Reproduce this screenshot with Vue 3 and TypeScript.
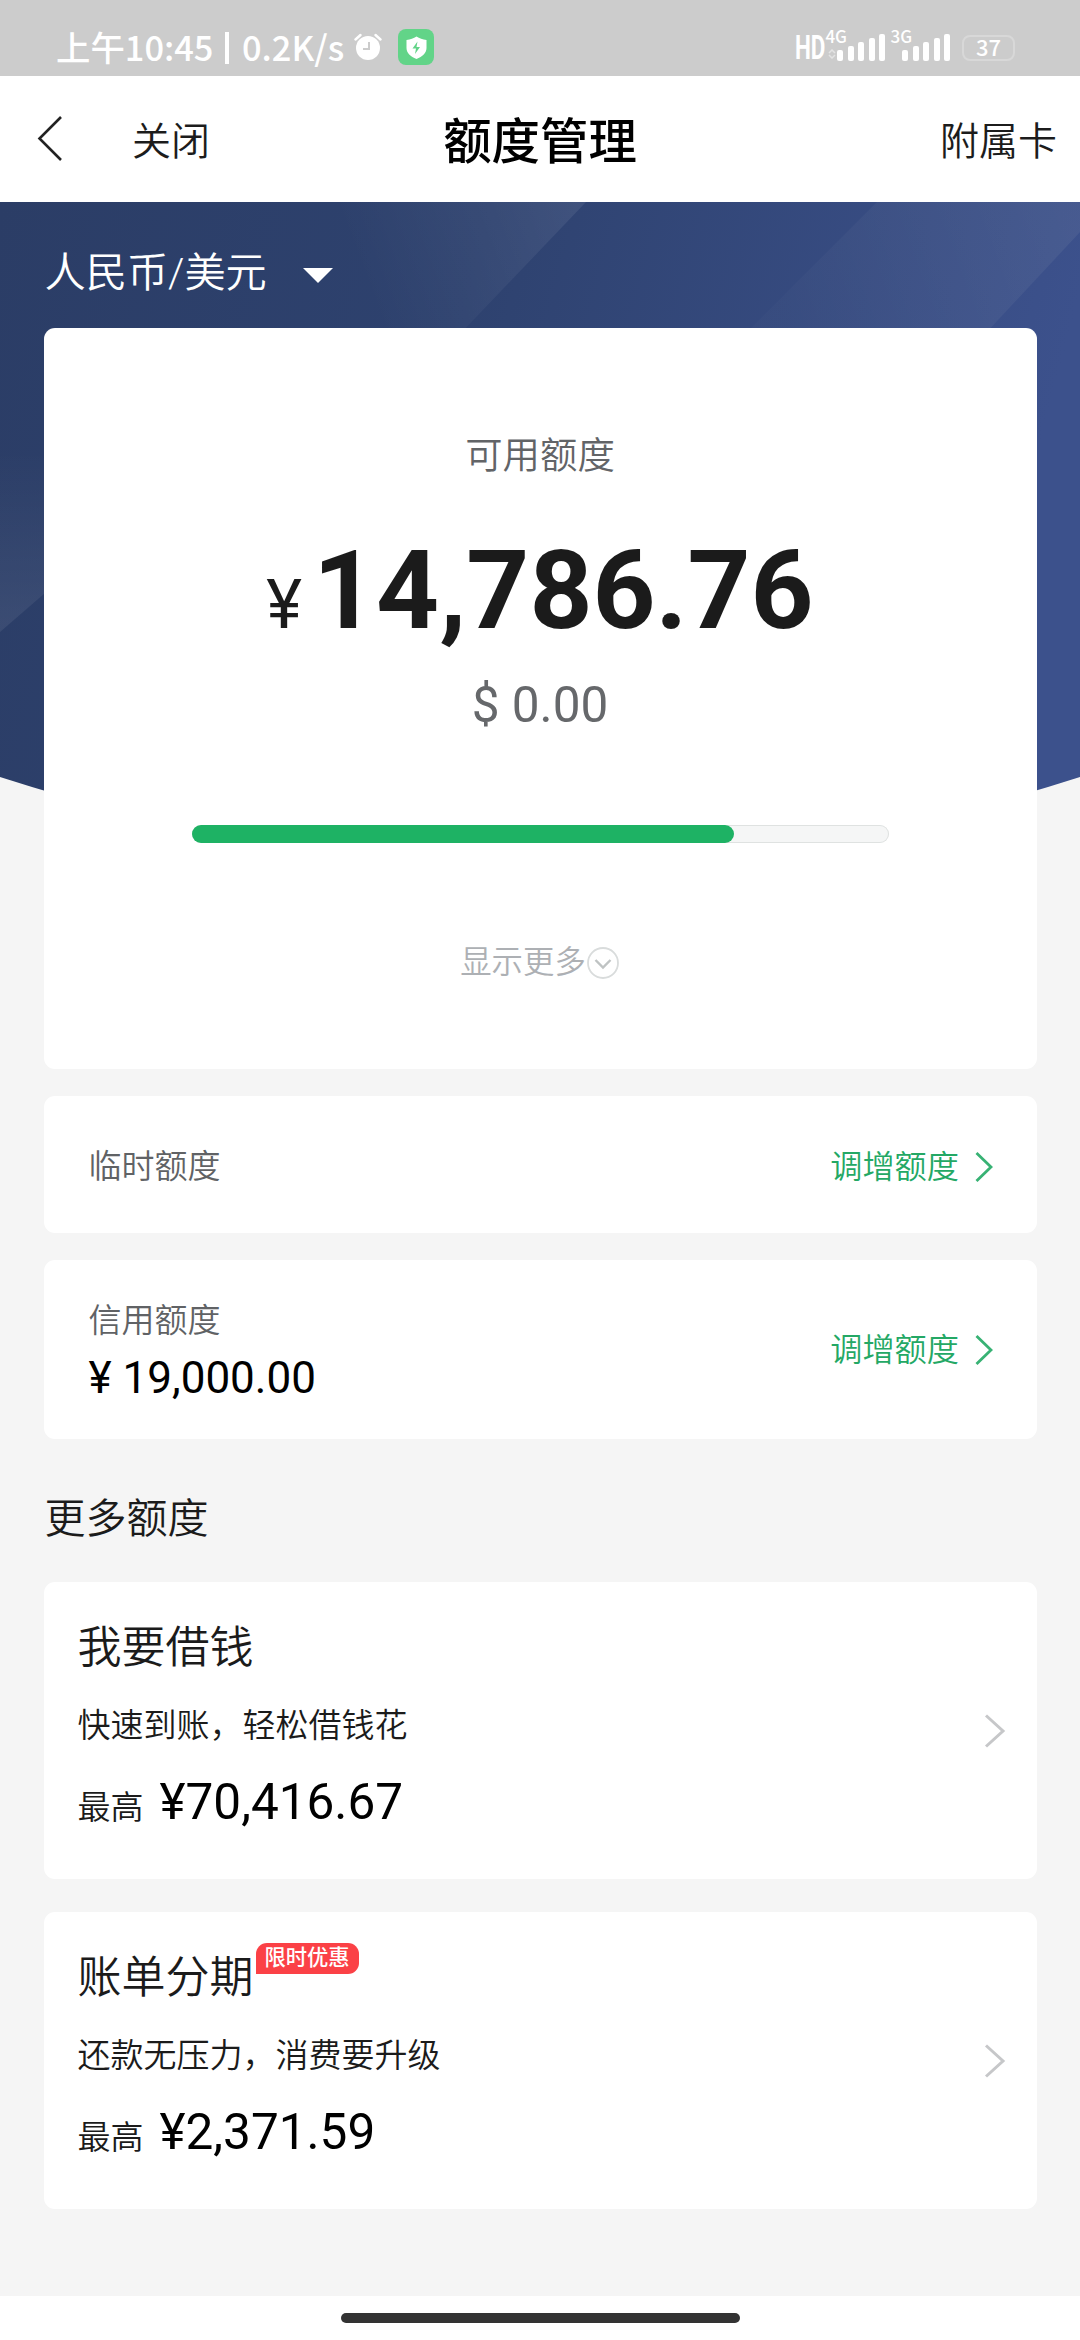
<script setup lang="ts">
interface LimitRow {
  label: string
  amount?: string
  action: string
}

interface Offer {
  title: string
  tag?: string
  desc: string
  amount: string
}

const limits: LimitRow[] = [
  { label: '临时额度', action: '调增额度' },
  { label: '信用额度', amount: '¥ 19,000.00', action: '调增额度' },
]

const offers: Offer[] = [
  { title: '我要借钱', desc: '快速到账，轻松借钱花', amount: '¥70,416.67' },
  { title: '账单分期', tag: '限时优惠', desc: '还款无压力，消费要升级', amount: '¥2,371.59' },
]

const total = 19000
const available = 14786.76
const availablePercent = (available / total) * 100

const bars = [11.5, 15.5, 19, 23, 27]
</script>

<template>
  <div class="page">
    <header class="status">
      <span class="clock">上午10:45</span>
      <span class="divider"></span>
      <span class="speed">0.2K/s</span>
      <svg class="alarm" width="28" height="28" viewBox="0 0 28 28">
        <circle cx="14" cy="15" r="12" fill="#fff" />
        <path d="M1.5 6.5 6.5 2M26.5 6.5 21.5 2" stroke="#fff" stroke-width="2.4" stroke-linecap="round" />
        <path d="M15 9v7h-6" fill="none" stroke="#ccc" stroke-width="2" />
      </svg>
      <svg class="guard" width="36" height="36" viewBox="0 0 36 36">
        <rect width="36" height="36" rx="8" fill="#62d488" />
        <path d="M18.5 7.5c3 2 6 3 10 3.5v8c0 5-4 8.5-10 11-6-2.5-10-6-10-11v-8c4-.5 7-1.5 10-3.5z" fill="#fff" />
        <path d="M19.5 12.5l-5 7h3.5l-1 5.5 5-7h-3.5z" fill="#62d488" />
      </svg>
      <div class="signals">
        <span class="hd">HD</span>
        <div class="net">
          <span class="gen">4G</span>
          <svg class="data" width="8" height="10" viewBox="0 0 8 10">
            <path d="M1 4l3-3 3 3M1 6l3 3 3-3" fill="none" stroke="#e4e4e4" stroke-width="1.5" />
          </svg>
          <i v-for="h in bars" :key="h" class="bar" :style="{ height: h + 'px' }"></i>
        </div>
        <div class="net second">
          <span class="gen">3G</span>
          <i v-for="h in bars" :key="h" class="bar" :style="{ height: h + 'px' }"></i>
        </div>
        <div class="battery">37</div>
      </div>
    </header>

    <nav class="nav">
      <div class="nav-left">
        <svg width="28" height="46" viewBox="0 0 28 46">
          <path d="M25 2 3.5 23.5 25 45" fill="none" stroke="#222" stroke-width="2.6" />
        </svg>
        <span>关闭</span>
      </div>
      <h1>额度管理</h1>
      <span class="nav-right">附属卡</span>
    </nav>

    <main class="body">
      <svg class="hero" width="1080" height="610" viewBox="0 202 1080 610">
        <defs>
          <linearGradient id="base" x1="0" y1="0" x2="1" y2="0.15">
            <stop offset="0" stop-color="#2b3d66" />
            <stop offset="0.45" stop-color="#2e426f" />
            <stop offset="1" stop-color="#3c518c" />
          </linearGradient>
          <linearGradient id="beamA" gradientUnits="userSpaceOnUse" x1="350" y1="250" x2="560" y2="170">
            <stop offset="0" stop-color="#fff" stop-opacity="0" />
            <stop offset="1" stop-color="#fff" stop-opacity="0.075" />
          </linearGradient>
          <linearGradient id="beamB" gradientUnits="userSpaceOnUse" x1="780" y1="300" x2="1060" y2="202">
            <stop offset="0" stop-color="#fffff0" stop-opacity="0.015" />
            <stop offset="1" stop-color="#ffffe0" stop-opacity="0.06" />
          </linearGradient>
          <linearGradient id="beamC" gradientUnits="userSpaceOnUse" x1="0" y1="450" x2="0" y2="620">
            <stop offset="0" stop-color="#fff" stop-opacity="0" />
            <stop offset="1" stop-color="#fff" stop-opacity="0.07" />
          </linearGradient>
          <clipPath id="curve">
            <path d="M0 202H1080V777Q810 864 540 864T0 777z" />
          </clipPath>
        </defs>
        <g clip-path="url(#curve)">
          <rect y="202" width="1080" height="610" fill="url(#base)" />
          <path d="M200 202H586L460 334H200z" fill="url(#beamA)" />
          <path d="M877 202H1080V232L985 334H745z" fill="url(#beamB)" />
          <path d="M0 400H120V528L0 632z" fill="url(#beamC)" />
        </g>
      </svg>

      <div class="currency">
        <span>人民币/美元</span>
        <svg width="30" height="15" viewBox="0 0 30 15"><path d="M0 0H30L15 15z" fill="#fff" /></svg>
      </div>

      <section class="card summary">
        <div class="sum-label">可用额度</div>
        <div class="sum-main"><span class="yen">¥</span><span class="big">14,786.76</span></div>
        <div class="sum-usd">$ 0.00</div>
        <div class="track"><div class="fill" :style="{ width: availablePercent + '%' }"></div></div>
        <div class="more">
          <span>显示更多</span>
          <svg width="34" height="34" viewBox="0 0 34 34" fill="none">
            <circle cx="17" cy="17" r="15" stroke="#d9dcdc" stroke-width="1.8" />
            <path d="M9.5 14 17 21.5 24.5 14" stroke="#bfc3c3" stroke-width="2.4" />
          </svg>
        </div>
      </section>

      <section v-for="(row, i) in limits" :key="row.label" class="card limit" :class="'limit-' + i">
        <div class="limit-info">
          <span class="limit-label">{{ row.label }}</span>
          <span v-if="row.amount" class="limit-amount">{{ row.amount }}</span>
        </div>
        <div class="limit-action">
          <span>{{ row.action }}</span>
          <svg width="18" height="32" viewBox="0 0 18 32">
            <path d="M1.5 2 16 16 1.5 30" fill="none" stroke="#38b274" stroke-width="2.8" />
          </svg>
        </div>
      </section>

      <h2>更多额度</h2>

      <section v-for="offer in offers" :key="offer.title" class="card offer">
        <div class="offer-info">
          <div class="offer-title">
            <span>{{ offer.title }}</span>
            <span v-if="offer.tag" class="tag">{{ offer.tag }}</span>
          </div>
          <div class="offer-desc">{{ offer.desc }}</div>
          <div class="offer-max">
            <span>最高</span>
            <span class="offer-amount">{{ offer.amount }}</span>
          </div>
        </div>
        <svg width="22" height="34" viewBox="0 0 22 34">
          <path d="M2 1.5 19 17 2 32.5" fill="none" stroke="#c6c7c9" stroke-width="3" />
        </svg>
      </section>
    </main>

    <footer class="home"><div class="pill"></div></footer>
  </div>
</template>

<style>
body {
  margin: 0;
  background: #f5f5f5;
}
</style>

<style scoped>
.page {
  width: 1080px;
  height: 2340px;
  display: flex;
  flex-direction: column;
  overflow: hidden;
  background: #f5f5f5;
  color: #1b1b1b;
  font-family: Roboto, 'Noto Sans CJK SC', sans-serif;
  font-weight: 350;
}
span {
  white-space: nowrap;
}
svg {
  flex: none;
}
.status {
  height: 76px;
  flex: none;
  box-sizing: border-box;
  padding: 19px 60px 0 56px;
  display: flex;
  align-items: flex-start;
  background: #ccc;
  color: #fff;
  font-family: 'Noto Sans CJK SC', sans-serif;
  font-weight: 500;
}
.clock,
.speed {
  font-size: 34.4px;
  line-height: 54px;
  height: 54px;
}
.clock {
  width: 170px;
}
.divider {
  width: 4px;
  height: 32px;
  margin: 13px 13px 0 -1px;
  background: #fff;
}
.speed {
  width: 112px;
}
.alarm {
  margin-top: 14px;
}
.guard {
  margin: 10px 0 0 16px;
}
.signals {
  flex: 1;
  height: 42px;
  display: flex;
  justify-content: flex-end;
  align-items: flex-end;
}
.hd {
  width: 42px;
  font-family: Roboto, sans-serif;
  font-size: 34px;
  line-height: 34px;
  height: 31px;
  font-weight: 700;
  transform: scaleX(0.66);
  transform-origin: left;
}
.net {
  position: relative;
  height: 42px;
  display: flex;
  align-items: flex-end;
  gap: 4.4px;
}
.second {
  margin-left: 17.5px;
}
.gen {
  position: absolute;
  left: -12px;
  top: 7px;
  font-size: 17px;
  line-height: 20px;
}
.data {
  position: absolute;
  left: -9px;
  bottom: 2px;
}
.bar {
  width: 6px;
  border-radius: 2px;
  background: #fff;
}
.battery {
  box-sizing: border-box;
  width: 53px;
  height: 26px;
  margin-left: 12px;
  margin-right: 5px;
  border: 2.5px solid #d8d8d8;
  border-radius: 8px;
  font-size: 22px;
  line-height: 19px;
  font-weight: 500;
  text-align: center;
}
.nav {
  height: 126px;
  flex: none;
  box-sizing: border-box;
  padding: 0 23px 2px 36px;
  display: grid;
  grid-template-columns: 1fr auto 1fr;
  align-items: center;
  background: #fff;
  font-family: 'Noto Sans CJK SC', sans-serif;
  font-size: 39px;
  color: #1c1c1c;
}
.nav-left {
  display: flex;
  align-items: center;
  gap: 68px;
}
.nav h1 {
  margin: 0 0 0 -13px;
  font-size: 48.4px;
  font-weight: 500;
  color: #000;
}
.nav-right {
  text-align: right;
}
.body {
  position: relative;
  flex: 1;
  padding: 0 43.5px;
}
.hero {
  position: absolute;
  left: 0;
  top: 0;
}
.currency {
  position: relative;
  box-sizing: border-box;
  height: 126px;
  padding: 41px 0 0 1px;
  display: flex;
  align-items: flex-start;
  gap: 36px;
  font-size: 41.2px;
  line-height: 60px;
  color: #fff;
}
.currency svg {
  margin-top: 25px;
}
.card {
  position: relative;
  box-sizing: border-box;
  border-radius: 11px;
  background: #fff;
}
.summary {
  height: 741px;
  padding-top: 98px;
  display: flex;
  flex-direction: column;
  align-items: center;
}
.sum-label {
  font-size: 37.4px;
  line-height: 60px;
  color: #626467;
}
.sum-main,
.sum-usd,
.limit-amount,
.offer-amount {
  font-weight: 400;
}
.sum-main {
  display: flex;
  align-items: baseline;
  margin-top: 40px;
  line-height: 130px;
  color: #1b1b1b;
}
.yen {
  font-size: 68px;
  margin-right: 11px;
}
.big {
  font-size: 110px;
  font-weight: 700;
}
.sum-usd {
  margin-top: 5px;
  font-size: 49.5px;
  line-height: 60px;
  color: #66686b;
}
.track {
  width: 697px;
  height: 18px;
  margin-top: 90px;
  border-radius: 9px;
  background: #f5f6f6;
  box-shadow: inset 0 0 0 1px #dfe2e1;
}
.fill {
  height: 18px;
  border-radius: 9px;
  background: #1eb264;
}
.more {
  display: flex;
  align-items: center;
  margin-top: 95px;
  font-size: 31.4px;
  line-height: 50px;
  color: #adb0b4;
}
.limit {
  margin-top: 27px;
  padding: 0 43.5px 0 45px;
  display: flex;
  align-items: center;
  justify-content: space-between;
}
.limit-0 {
  height: 137px;
  padding-top: 4px;
}
.limit-1 {
  height: 179px;
}
.limit-info {
  display: flex;
  flex-direction: column;
}
.limit-1 .limit-info {
  padding-top: 6px;
}
.limit-label {
  font-size: 33px;
  line-height: 48px;
  color: #606265;
}
.limit-amount {
  margin-top: 3px;
  font-size: 44px;
  line-height: 60px;
  color: #000;
}
.limit-action {
  display: flex;
  align-items: center;
  gap: 16px;
  font-size: 32.2px;
  color: #24a865;
}
.limit-action span {
  padding-bottom: 6px;
}
h2 {
  margin: 51px 0 33px 1px;
  font-size: 41px;
  line-height: 59px;
  font-weight: 350;
}
.offer {
  height: 297px;
  margin-bottom: 33px;
  padding: 0 31px 0 34px;
  display: flex;
  align-items: center;
  justify-content: space-between;
}
.offer-info {
  margin-top: -4px;
}
.offer-title {
  display: flex;
  align-items: flex-start;
  font-size: 44px;
  line-height: 60px;
}
.tag {
  width: 103px;
  height: 31px;
  margin: -5px 0 0 2px;
  border-radius: 11px 11px 11px 0;
  background: #fb4146;
  color: #fff;
  font-size: 21.3px;
  line-height: 29px;
  font-weight: 500;
  text-align: center;
}
.offer-desc {
  margin-top: 20px;
  font-size: 33px;
  line-height: 56px;
}
.offer-max {
  display: flex;
  align-items: baseline;
  gap: 16px;
  margin-top: 17px;
  font-size: 33px;
  line-height: 62px;
}
.offer-amount {
  font-size: 49.5px;
  color: #000;
}
.home {
  height: 44px;
  flex: none;
  display: flex;
  justify-content: center;
  align-items: flex-start;
  background: #fff;
}
.pill {
  width: 399px;
  height: 10px;
  margin-top: 17px;
  border-radius: 5px;
  background: #333;
}
</style>
